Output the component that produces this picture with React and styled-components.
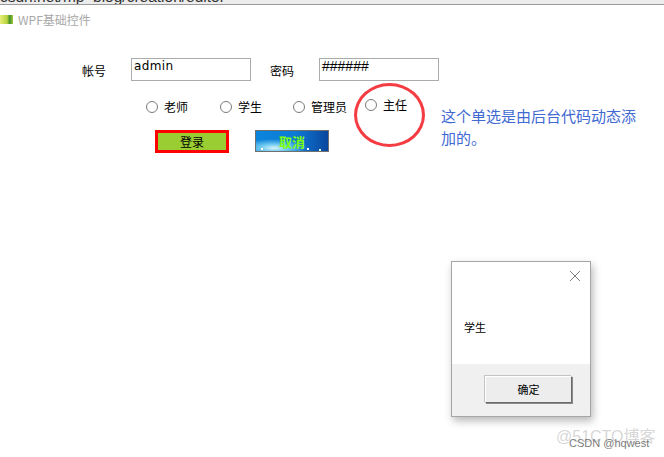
import React from 'react'
import styled, { createGlobalStyle } from 'styled-components'

const cjk = '"Noto Sans CJK SC", "Liberation Sans", sans-serif'

const Global = createGlobalStyle`
html, body { margin: 0; padding: 0; background: #fff; }
`

const Page = styled.div`
position: relative;
width: 664px;
height: 457px;
overflow: hidden;
background: #fff;
font-family: ${cjk};
color: #000;
`

const UrlStrip = styled.div`
height: 4px;
overflow: hidden;
background: #ececec;
border-bottom: 1px solid #9a9a9a;
font: 15.5px/16px "Liberation Sans", sans-serif;
color: #333;
white-space: nowrap;
span { display: block; margin-top: -11px; }
`

const TitleBar = styled.div`
display: flex;
align-items: center;
gap: 5px;
height: 28px;
font-size: 12px;
color: #a8a8a8;
`

const AppIcon = styled.div`
width: 13px;
height: 9px;
background: linear-gradient(90deg, #e8ee7a 0%, #b9d23c 55%, #3f8f2a 75%, #a8c83a 100%);
`

const Form = styled.div`
display: flex;
flex-direction: column;
padding-top: 25px;
`

const LoginRow = styled.div`
display: flex;
align-items: flex-start;
height: 23px;
padding-left: 82px;
`

const FieldLabel = styled.label`
width: ${p => p.$w}px;
font-size: 12px;
line-height: 17px;
padding-top: 4px;
`

const TextBox = styled.div`
box-sizing: border-box;
width: 120px;
height: 23px;
margin-right: 19px;
border: 1px solid #ababab;
padding: 0 2px;
font: 12px/15px "DejaVu Sans", sans-serif;
letter-spacing: .4px;
`

const PasswordBox = styled(TextBox)`
font: 14px/14px "Liberation Sans", sans-serif;
letter-spacing: 0;
`

const RadioRow = styled.div`
display: flex;
margin-top: 17px;
padding-left: 146px;
`

const RadioItem = styled.label`
display: flex;
align-items: center;
gap: 6px;
width: ${p => p.$w}px;
height: 17px;
font-size: 12px;
line-height: 17px;
transform: translateY(${p => p.$up || 0}px);
`

const RadioDot = styled.span`
box-sizing: border-box;
width: 12px;
height: 12px;
border: 1px solid #7a7a7a;
border-radius: 50%;
background: #fff;
`

const ButtonRow = styled.div`
display: flex;
gap: 26px;
margin-top: 15px;
padding-left: 155px;
`

const LoginButton = styled.button`
box-sizing: border-box;
width: 74px;
height: 23px;
padding: 0;
border: 3px solid #ff0000;
background: #9acd32;
font: 12px/15px ${cjk};
color: #000;
`

const CancelButton = styled.button`
box-sizing: border-box;
width: 74px;
height: 22px;
padding: 0;
border: 1px solid #6f6f6f;
background:
  radial-gradient(circle 1px at 6px 18px, #fff 0%, #fff 100%, transparent 100%),
  radial-gradient(circle 1px at 52px 18px, #fff 0%, #fff 100%, transparent 100%),
  radial-gradient(circle 1px at 64px 19px, #dff 0%, #dff 100%, transparent 100%),
  radial-gradient(ellipse 34px 9px at 18px 17px, #d8f4fd 0%, rgba(130, 215, 245, .85) 40%, rgba(20, 130, 220, 0) 100%),
  linear-gradient(90deg, #0b86dc 0%, #0e7ad4 55%, #0a469e 100%);
font: 700 13px/15px ${cjk};
color: #7dff12;
`

const Note = styled.div`
position: absolute;
left: 441px;
top: 105px;
width: 205px;
font-size: 15px;
line-height: 22px;
color: #4169d2;
`

const Ring = styled.div`
position: absolute;
left: 354px;
top: 83px;
box-sizing: border-box;
width: 71px;
height: 64px;
border: 3px solid #f43c42;
border-radius: 50%;
`

const Dialog = styled.div`
position: absolute;
left: 451px;
top: 261px;
box-sizing: border-box;
width: 140px;
height: 156px;
display: flex;
flex-direction: column;
border: 1px solid #a6a6a6;
background: #fff;
box-shadow: 2px 4px 8px rgba(0, 0, 0, .28);
`

const DialogBody = styled.div`
position: relative;
flex: 1;
display: flex;
align-items: center;
padding: 28px 0 0 12px;
font-size: 11px;
`

const CloseIcon = styled.svg`
position: absolute;
right: 9px;
top: 8px;
width: 12px;
height: 12px;
`

const DialogFooter = styled.div`
box-sizing: border-box;
height: 52px;
display: flex;
justify-content: flex-end;
padding: 12px 18px 0 0;
background: #f0f0f0;
`

const OkButton = styled.button`
box-sizing: border-box;
width: 87px;
height: 27px;
padding: 0;
border: 1px solid;
border-color: #fff #6b6b6b #6b6b6b #fff;
box-shadow: 1px 1px 0 #8a8a8a, -1px -1px 0 #c4c4c4;
background: #ededed;
font: 11px/15px ${cjk};
color: #000;
`

const Watermark = styled.div`
position: absolute;
left: 556px;
top: 427px;
font: 16px/20px "Liberation Sans", ${cjk};
color: rgba(150, 150, 150, .4);
white-space: nowrap;
`

const Credit = styled.div`
position: absolute;
left: 569px;
top: 436px;
font: 11px/14px "Liberation Sans", sans-serif;
color: #7b7b7b;
white-space: nowrap;
`

const roles = [
  { name: '老师', w: 74 },
  { name: '学生', w: 73 },
  { name: '管理员', w: 72 },
  { name: '主任', w: 60, up: -2 },
]

const App = () => {
  return (
    <Page>
      <Global />
      <UrlStrip><span>csdn.net/mp_blog/creation/editor</span></UrlStrip>
      <TitleBar>
        <AppIcon />
        WPF基础控件
      </TitleBar>
      <Form>
        <LoginRow>
          <FieldLabel $w={49}>帐号</FieldLabel>
          <TextBox>admin</TextBox>
          <FieldLabel $w={49}>密码</FieldLabel>
          <PasswordBox>######</PasswordBox>
        </LoginRow>
        <RadioRow>
          {roles.map(r => (
            <RadioItem key={r.name} $w={r.w} $up={r.up}>
              <RadioDot />
              {r.name}
            </RadioItem>
          ))}
        </RadioRow>
        <ButtonRow>
          <LoginButton>登录</LoginButton>
          <CancelButton>取消</CancelButton>
        </ButtonRow>
      </Form>
      <Ring />
      <Note>这个单选是由后台代码动态添加的。</Note>
      <Dialog>
        <DialogBody>
          <CloseIcon viewBox="0 0 12 12">
            <path d="M1 1 L11 11 M11 1 L1 11" stroke="#7f7f7f" strokeWidth="1" fill="none" />
          </CloseIcon>
          学生
        </DialogBody>
        <DialogFooter>
          <OkButton>确定</OkButton>
        </DialogFooter>
      </Dialog>
      <Watermark>@51CTO博客</Watermark>
      <Credit>CSDN @hqwest</Credit>
    </Page>
  )
}

export default App
